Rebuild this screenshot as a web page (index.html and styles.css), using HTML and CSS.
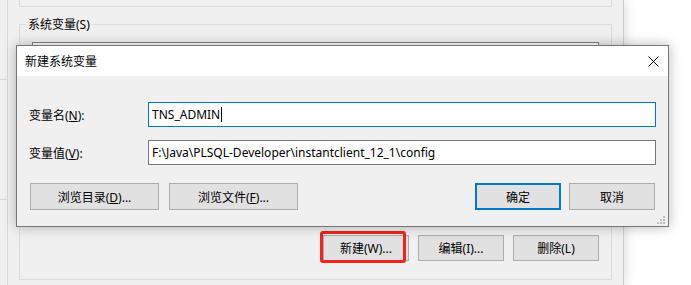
FILE: index.html
```html
<!DOCTYPE html>
<html lang="zh-CN">
<head>
    <meta charset="UTF-8">
    <title>新建系统变量</title>
    <link rel="stylesheet" href="styles.css">
</head>
<body>
    <div class="desktop">
        <!-- Environment variables window behind -->
        <div class="back-window">
            <div class="edge">
                <div class="edge-part first"></div>
                <div class="edge-part second"></div>
                <div class="edge-part"></div>
            </div>
            <div class="back-main">
                <div class="top-group"></div>
                <div class="sys-group">
                    <div class="group-title">系统变量(S)</div>
                    <div class="var-list"></div>
                    <div class="back-buttons">
                        <button class="win-btn back-btn highlighted">新建(W)...</button>
                        <button class="win-btn back-btn">编辑(I)...</button>
                        <button class="win-btn back-btn">删除(L)</button>
                    </div>
                </div>
            </div>
        </div>

        <!-- New system variable dialog -->
        <div class="dialog">
            <div class="title-bar">
                <span class="title">新建系统变量</span>
                <span class="close">
                    <svg width="11" height="11" viewBox="0 0 11 11">
                        <path d="M0.5 0.5 L10.5 10.5 M10.5 0.5 L0.5 10.5" stroke="#000" stroke-width="1" fill="none"/>
                    </svg>
                </span>
            </div>
            <div class="dialog-body">
                <div class="field-row">
                    <span class="field-label">变量名(<u>N</u>):</span>
                    <div class="field-input focused">TNS_ADMIN<span class="caret"></span></div>
                </div>
                <div class="field-row second">
                    <span class="field-label">变量值(<u>V</u>):</span>
                    <div class="field-input">F:\Java\PLSQL-Developer\instantclient_12_1\config</div>
                </div>
                <div class="dialog-buttons">
                    <button class="win-btn wide">浏览目录(<u>D</u>)...</button>
                    <button class="win-btn wide">浏览文件(<u>F</u>)...</button>
                    <span class="spacer"></span>
                    <button class="win-btn small default">确定</button>
                    <button class="win-btn small">取消</button>
                </div>
            </div>
            <svg class="grip" width="8" height="8" viewBox="0 0 8 8">
                <rect x="6" y="0" width="2" height="2" fill="#bdbdbd"/>
                <rect x="3" y="3" width="2" height="2" fill="#bdbdbd"/>
                <rect x="6" y="3" width="2" height="2" fill="#bdbdbd"/>
                <rect x="0" y="6" width="2" height="2" fill="#bdbdbd"/>
                <rect x="3" y="6" width="2" height="2" fill="#bdbdbd"/>
                <rect x="6" y="6" width="2" height="2" fill="#bdbdbd"/>
            </svg>
        </div>
    </div>
</body>
</html>
```

FILE: styles.css
```css
body {
    margin: 0;
    background-color: #ffffff;
    font-family: 'Noto Sans', 'Noto Sans CJK SC', sans-serif;
    font-size: 12px;
    color: #000000;
}
.desktop {
    position: relative;
    width: 691px;
    height: 285px;
    overflow: hidden;
    background-color: #ffffff;
}
.back-window {
    width: 624px;
    height: 285px;
    box-sizing: border-box;
    display: flex;
    background-color: #f0f0f0;
    border-right: 1px solid #cfcfcf;
    box-shadow: 2px 0 10px rgba(0, 0, 0, 0.12);
}
.edge {
    width: 7px;
    display: flex;
    flex-direction: column;
    border-right: 1px solid #d9d9d9;
}
.edge-part {
    flex: 1;
}
.edge-part.first {
    flex: none;
    height: 79px;
    border-bottom: 1px solid #d9d9d9;
}
.edge-part.second {
    flex: none;
    height: 119px;
    border-bottom: 1px solid #d9d9d9;
}
.back-main {
    display: flex;
    flex-direction: column;
    padding-left: 11px;
}
.top-group {
    width: 593px;
    height: 7px;
    box-sizing: border-box;
    border: 1px solid #dcdcdc;
    border-top: none;
}
.sys-group {
    width: 593px;
    height: 256px;
    margin-top: 17px;
    box-sizing: border-box;
    border: 1px solid #dcdcdc;
    display: flex;
    flex-direction: column;
}
.group-title {
    align-self: flex-start;
    margin-top: -8px;
    margin-left: 6px;
    padding: 0 2px;
    line-height: 16px;
    background-color: #f0f0f0;
}
.var-list {
    width: 567px;
    height: 180px;
    margin-top: 9px;
    margin-left: 12px;
    box-sizing: border-box;
    border: 1px solid #828282;
    background-color: #ffffff;
}
.back-buttons {
    display: flex;
    justify-content: flex-end;
    gap: 9px;
    margin-top: 13px;
    margin-right: 12px;
}
.win-btn {
    font-family: 'Noto Sans', 'Noto Sans CJK SC', sans-serif;
    font-size: 12px;
    color: #000000;
    background-color: #e1e1e1;
    border: 1px solid #adadad;
    padding: 0;
    margin: 0;
    box-sizing: border-box;
}
.back-btn {
    width: 86px;
    height: 26px;
}
.highlighted {
    position: relative;
}
.highlighted::after {
    content: '';
    position: absolute;
    left: -4px;
    right: 2px;
    top: -5px;
    bottom: -3px;
    border: 3px solid #f2231b;
    border-radius: 3px;
}
.dialog {
    position: absolute;
    left: 16px;
    top: 45px;
    width: 653px;
    height: 182px;
    box-sizing: border-box;
    border: 1px solid #777777;
    display: flex;
    flex-direction: column;
    background-color: #f0f0f0;
    box-shadow: 0 0 12px rgba(0, 0, 0, 0.28);
}
.title-bar {
    height: 30px;
    display: flex;
    align-items: center;
    justify-content: space-between;
    padding-left: 8px;
    background-color: #ffffff;
}
.close {
    width: 30px;
    display: flex;
    justify-content: center;
}
.dialog-body {
    flex: 1;
    padding: 26px 12px 0 12px;
    display: flex;
    flex-direction: column;
}
.field-row {
    display: flex;
    align-items: center;
}
.field-row.second {
    margin-top: 13px;
}
.field-label {
    width: 119px;
}
.field-input {
    width: 508px;
    height: 25px;
    box-sizing: border-box;
    border: 1px solid #7a7a7a;
    background-color: #ffffff;
    padding-left: 3px;
    display: flex;
    align-items: center;
}
.field-input.focused {
    border-color: #0078d7;
}
.caret {
    width: 1px;
    height: 15px;
    margin-left: 1px;
    background-color: #000000;
}
.dialog-buttons {
    display: flex;
    margin-top: 18px;
    margin-left: 1px;
    margin-right: 1px;
    gap: 10px;
}
.spacer {
    flex: 1;
}
.wide {
    width: 129px;
    height: 27px;
}
.small {
    width: 86px;
    height: 27px;
}
.small + .small {
    margin-left: -2px;
}
.default {
    border: 2px solid #0078d7;
}
.grip {
    position: absolute;
    right: 3px;
    bottom: 2px;
}
```
